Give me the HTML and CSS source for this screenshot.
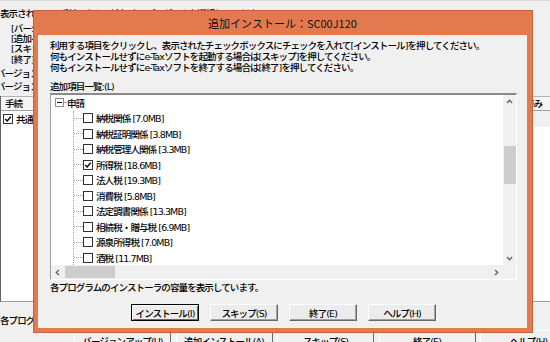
FILE: index.html
```html
<!DOCTYPE html>
<html lang="ja">
<head>
<meta charset="utf-8">
<title>追加インストール</title>
<link rel="stylesheet" href="styles.css">
</head>
<body>
<div class="screen">
  <div class="app">
    <div class="app-topbar"></div>
    <p class="app-lead">表示されている手続のうち、追加するプログラムを選択してください。</p>
    <ul class="app-keys">
      <li>[バージョンアップ]：最新のバージョンに更新します。</li>
      <li>[追加インストール]：手続を追加します。</li>
      <li>[スキップ]：インストールせずに起動します。</li>
      <li>[終了]：e-Taxソフトを終了します。</li>
    </ul>
    <p class="app-ver app-ver-1">バージョンアップが必要なプログラム：</p>
    <p class="app-ver app-ver-2">バージョン情報</p>
    <div class="app-table">
      <div class="app-thead">
        <span class="th-first">手続</span>
        <span class="th-mid">バージョン</span>
        <span class="th-last">インストール済み</span>
      </div>
      <div class="app-row">
        <span class="td-first"><span class="cb cb-app"><svg viewBox="0 0 10 10" width="8" height="8"><polyline points="1.5,5 4,7.5 8.5,2" fill="none" stroke="#000" stroke-width="1.8"/></svg></span>共通</span>
        <span class="td-mid"></span>
        <span class="td-last"></span>
      </div>
      <div class="app-tbody"></div>
    </div>
    <p class="app-status">各プログラムのインストーラの容量を表示しています。</p>
    <div class="app-buttons">
      <span class="app-btn">バージョンアップ(U)</span>
      <span class="app-btn">追加インストール(A)</span>
      <span class="app-btn">スキップ(S)</span>
      <span class="app-btn">終了(E)</span>
      <span class="app-btn">ヘルプ(H)</span>
    </div>
  </div>

  <div class="dialog">
    <div class="dialog-title">追加インストール：SC00J120</div>
    <div class="dialog-body">
      <p class="desc">利用する項目をクリックし、表示されたチェックボックスにチェックを入れて[インストール]を押してください。<br>何もインストールせずにe-Taxソフトを起動する場合は[スキップ]を押してください。<br>何もインストールせずにe-Taxソフトを終了する場合は[終了]を押してください。</p>
      <p class="list-label">追加項目一覧:(L)</p>
      <div class="listbox">
        <div class="tree">
          <div class="tree-root"><span class="expander"></span><span class="dash"></span><span class="item">申請</span></div>
          <ul class="tree-children">
            <li><span class="stub"></span><span class="cb"></span><span class="item">納税関係 [7.0MB]</span></li>
            <li><span class="stub"></span><span class="cb"></span><span class="item">納税証明関係 [3.8MB]</span></li>
            <li><span class="stub"></span><span class="cb"></span><span class="item">納税管理人関係 [3.3MB]</span></li>
            <li><span class="stub"></span><span class="cb"><svg viewBox="0 0 10 10" width="8" height="8"><polyline points="1.5,5 4,7.5 8.5,2" fill="none" stroke="#000" stroke-width="1.8"/></svg></span><span class="item">所得税 [18.6MB]</span></li>
            <li><span class="stub"></span><span class="cb"></span><span class="item">法人税 [19.3MB]</span></li>
            <li><span class="stub"></span><span class="cb"></span><span class="item">消費税 [5.8MB]</span></li>
            <li><span class="stub"></span><span class="cb"></span><span class="item">法定調書関係 [13.3MB]</span></li>
            <li><span class="stub"></span><span class="cb"></span><span class="item">相続税・贈与税 [6.9MB]</span></li>
            <li><span class="stub"></span><span class="cb"></span><span class="item">源泉所得税 [7.0MB]</span></li>
            <li><span class="stub"></span><span class="cb"></span><span class="item">酒税 [11.7MB]</span></li>
            <li><span class="stub"></span><span class="cb"></span><span class="item">印紙税 [4.2MB]</span></li>
          </ul>
        </div>
        <div class="vscroll">
          <span class="sb-btn"><svg width="7" height="5" viewBox="0 0 7 5"><polyline points="1,4 3.5,1.3 6,4" fill="none" stroke="#606060" stroke-width="1.3"/></svg></span>
          <span class="sb-track-v"><span class="thumb-v"></span></span>
          <span class="sb-btn"><svg width="7" height="5" viewBox="0 0 7 5"><polyline points="1,1 3.5,3.7 6,1" fill="none" stroke="#606060" stroke-width="1.3"/></svg></span>
        </div>
        <div class="hscroll">
          <span class="sb-btn"><svg width="5" height="7" viewBox="0 0 5 7"><polyline points="4,1 1.3,3.5 4,6" fill="none" stroke="#606060" stroke-width="1.3"/></svg></span>
          <span class="sb-track-h"><span class="thumb-h"></span></span>
          <span class="sb-btn"><svg width="5" height="7" viewBox="0 0 5 7"><polyline points="1,1 3.7,3.5 1,6" fill="none" stroke="#606060" stroke-width="1.3"/></svg></span>
        </div>
        <div class="corner"></div>
      </div>
      <p class="status">各プログラムのインストーラの容量を表示しています。</p>
      <div class="btn-row">
        <button class="btn btn-default" type="button">インストール(I)</button>
        <button class="btn" type="button">スキップ(S)</button>
        <button class="btn" type="button">終了(E)</button>
        <button class="btn" type="button">ヘルプ(H)</button>
      </div>
    </div>
  </div>
</div>
</body>
</html>
```

FILE: styles.css
```css
* { box-sizing: border-box; margin: 0; padding: 0; }
html, body { width: 550px; height: 342px; overflow: hidden; }
body {
  font-family: "DejaVu Sans", "Noto Sans CJK JP", sans-serif;
  font-size: 9.5px;
  font-weight: 500;
  letter-spacing: -0.9px;
  color: #000;
  background: #f0f0f0;
}
.screen { position: relative; width: 550px; height: 342px; overflow: hidden; }

/* background application window */
.app { display: flex; flex-direction: column; height: 100%; }
.app-topbar { height: 4px; background: #f8f8f8; border-bottom: 1px solid #dcdcdc; }
.app-lead { margin-top: 7px; height: 12px; line-height: 12px; white-space: nowrap; }
.app-keys { list-style: none; margin-top: 4px; padding-left: 11px; }
.app-keys li { height: 10.2px; line-height: 10.2px; white-space: nowrap; }
.app-ver { white-space: nowrap; margin-left: -4px; }
.app-ver-1 { margin-top: 3px; height: 12px; line-height: 12px; }
.app-ver-2 { height: 13px; line-height: 13px; }
.app-table { margin-top: 3px; border-left: 1px solid #646464; display: flex; flex-direction: column; }
.app-thead {
  height: 15px; display: flex; align-items: center;
  border-top: 1px solid #b4b4b4; border-bottom: 1px solid #a0a0a0;
  background: #f5f5f5;
}
.th-first { width: 120px; padding-left: 4px; }
.th-mid { flex: 1; padding-left: 4px; }
.th-last { width: 120px; text-align: right; padding-right: 8px; white-space: nowrap; }
.app-row { height: 16px; display: flex; background: #fff; }
.td-first { width: 120px; display: flex; align-items: center; gap: 3px; padding-left: 2px; }
.td-mid { flex: 1; }
.td-last { width: 120px; background: #f0f0f0; }
.app-tbody { height: 175px; background: #fff; border-bottom: 1px solid #a0a0a0; }
.app-status { margin-top: 13px; height: 12px; line-height: 12px; white-space: nowrap; }
.app-buttons { margin-top: 3px; display: flex; gap: 4.5px; padding-left: 74px; }
.app-btn {
  flex: 0 0 97px; height: 22px; padding-top: 5px;
  text-align: center; line-height: 12px; white-space: nowrap;
  border: 1px solid; border-color: #fff #696969 #696969 #fff;
  background: #f0f0f0;
}

/* dialog window */
.dialog {
  position: absolute; left: 33px; top: 10px;
  width: 500px; height: 323px;
  display: flex; flex-direction: column;
  background: #e2794f;
  border: 1px solid #c2633d;
  padding: 0 5px 4px 4px;
}
.dialog-title {
  height: 24px; display: flex; align-items: center; justify-content: center;
  font-family: "Noto Sans CJK JP", sans-serif;
  font-size: 11px; font-weight: 400; letter-spacing: 0; color: #111;
}
.dialog-body {
  flex: 1; background: #f0f0f0;
  padding: 5px 10px 0 12px;
  display: flex; flex-direction: column;
}
.desc { line-height: 11px; white-space: nowrap; }
.list-label { margin-top: 8px; height: 12px; line-height: 12px; }
.listbox {
  height: 187px; flex: none;
  background: #fff;
  border-style: solid; border-width: 2px 1px 1px 1px;
  border-color: #8a8a8a #fff #fff #a0a0a0;
  display: grid;
  grid-template-columns: 1fr 13px;
  grid-template-rows: 1fr 14px;
  overflow: hidden;
}
.tree { overflow: hidden; }
.tree-root { height: 15.5px; display: flex; align-items: center; padding-left: 4px; }
.expander {
  width: 9px; height: 9px; border: 1px solid #8e8f8f; background: #fff;
  display: flex; align-items: center; justify-content: center;
}
.expander::after { content: ""; display: block; width: 5px; height: 1px; background: #000; }
.dash { width: 2px; border-top: 1px dotted #a0a0a0; }
.tree-children { list-style: none; margin-left: 22px; border-left: 1px dotted #a0a0a0; }
.tree-children li { height: 15.5px; display: flex; align-items: center; }
.stub { width: 9px; border-top: 1px dotted #a0a0a0; }
.cb {
  width: 10px; height: 10px; border: 1px solid #333; background: #fff;
  display: flex; align-items: center; justify-content: center; flex: none;
}
.item { margin-left: 3px; white-space: nowrap; }
.tree-root .item { margin-left: 1px; }

.vscroll { background: #f0f0f0; display: flex; flex-direction: column; }
.sb-btn { flex: 0 0 13px; display: flex; align-items: center; justify-content: center; }
.sb-track-v { flex: 1; display: flex; flex-direction: column; }
.thumb-v { margin-top: 38px; height: 38px; margin-left: 1px; background: #cdcdcd; }
.hscroll { background: #f0f0f0; display: flex; }
.sb-track-h { flex: 1; display: flex; align-items: center; }
.thumb-h { margin-left: 1px; width: 50px; height: 12px; background: #cdcdcd; }
.corner { background: #f0f0f0; }

.status { margin-top: 2px; height: 12px; line-height: 12px; white-space: nowrap; }
.btn-row { margin-top: 10px; display: flex; justify-content: center; gap: 11px; }
.btn {
  width: 68px; height: 17px;
  font: inherit; letter-spacing: inherit; color: #000;
  background: #ececec;
  border: 1px solid; border-color: #fff #696969 #696969 #fff;
  box-shadow: inset -1px -1px #a0a0a0;
  display: flex; align-items: center; justify-content: center;
  white-space: nowrap;
}
.btn-default {
  border-color: #000;
  box-shadow: inset 1px 1px #fff, inset -1px -1px #696969;
}
```
